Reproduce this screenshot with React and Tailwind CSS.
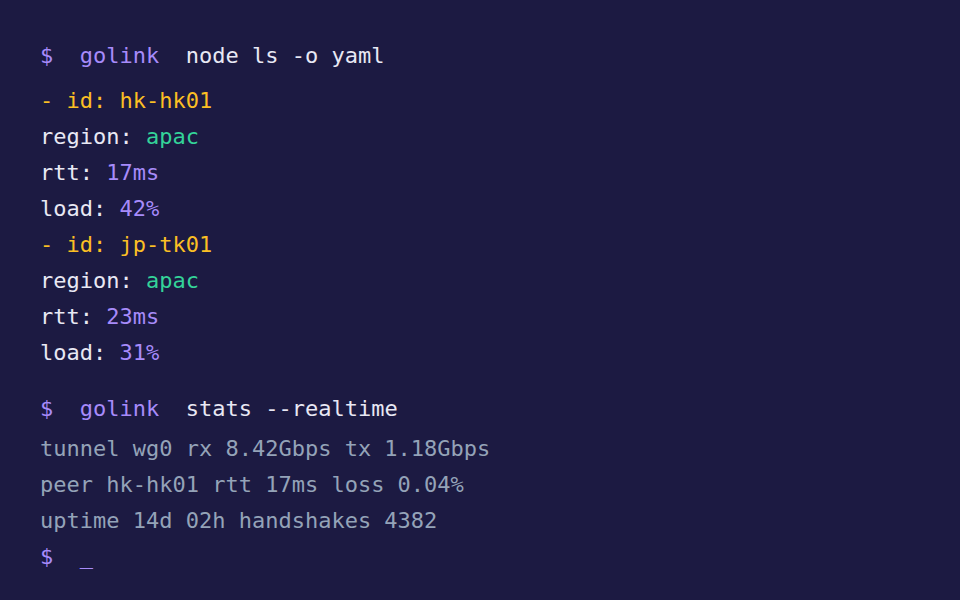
const NODES = [
  { id: "hk-hk01", region: "apac", rtt: "17ms", load: "42%" },
  { id: "jp-tk01", region: "apac", rtt: "23ms", load: "31%" },
];

const STATS = [
  "tunnel wg0 rx 8.42Gbps tx 1.18Gbps",
  "peer hk-hk01 rtt 17ms loss 0.04%",
  "uptime 14d 02h handshakes 4382",
];

function Prompt({ cmd, className = "" }) {
  return (
    <div className={`h-9 leading-9 ${className}`}>
      <span className="text-[#a78bfa]">$  golink  </span>
      <span className="text-[#e8e8f4]">{cmd}</span>
    </div>
  );
}

export default function App() {
  return (
    <div
      className="min-h-screen w-full bg-[#1c1a42] px-10 pt-[38px] text-[22px] whitespace-pre"
      style={{ fontFamily: '"DejaVu Sans Mono", "Liberation Mono", monospace' }}
    >
      <Prompt cmd="node ls -o yaml" />
      <div className="mt-[9px] text-[#e8e8f4]">
        {NODES.map((n) => (
          <div key={n.id}>
            <div className="h-9 leading-9 text-[#fbbf24]">- id: {n.id}</div>
            <div className="h-9 leading-9">
              region: <span className="text-[#34d399]">{n.region}</span>
            </div>
            <div className="h-9 leading-9">
              rtt: <span className="text-[#a78bfa]">{n.rtt}</span>
            </div>
            <div className="h-9 leading-9">
              load: <span className="text-[#a78bfa]">{n.load}</span>
            </div>
          </div>
        ))}
      </div>
      <Prompt cmd="stats --realtime" className="mt-5" />
      <div className="mt-1 text-[#94a3b8]">
        {STATS.map((s) => (
          <div key={s} className="h-9 leading-9">
            {s}
          </div>
        ))}
      </div>
      <div className="h-9 leading-9 text-[#a78bfa]">$  _</div>
    </div>
  );
}
